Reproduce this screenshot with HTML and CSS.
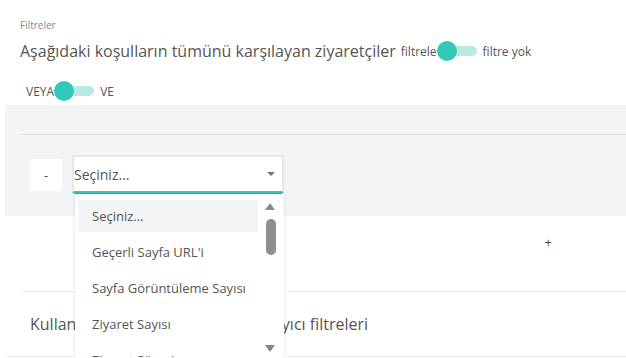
FILE: index.html
```html
<!DOCTYPE html>
<html>
  <head>
    <title>Filtreler</title>
    <link rel="stylesheet" href="styles.css">
  </head>
  <body>
    <div class="header">
      <div class="caption">Filtreler</div>
      <div class="title-row">
        <h2>Aşağıdaki koşulların tümünü karşılayan ziyaretçiler</h2>
        <span class="switch-label">filtrele</span>
        <span class="switch"><span class="knob"></span></span>
        <span class="switch-label">filtre yok</span>
      </div>
      <div class="op-row">
        <span class="switch-label">VEYA</span>
        <span class="switch"><span class="knob"></span></span>
        <span class="switch-label">VE</span>
      </div>
    </div>

    <div class="panel">
      <div class="panel-line"></div>
      <div class="rule">
        <button class="remove">-</button>
        <div class="select">
          <span>Seçiniz...</span>
          <span class="caret"></span>
          <div class="menu">
            <div class="options">
              <div class="option active">Seçiniz...</div>
              <div class="option">Geçerli Sayfa URL'i</div>
              <div class="option">Sayfa Görüntüleme Sayısı</div>
              <div class="option">Ziyaret Sayısı</div>
              <div class="option">Ziyaret Süresi</div>
            </div>
            <div class="scrollbar">
              <span class="arrow up"></span>
              <span class="thumb"></span>
              <span class="arrow down"></span>
            </div>
          </div>
        </div>
      </div>
    </div>

    <div class="add-row">
      <span class="add">+</span>
    </div>

    <div class="section">
      <h2>Kullanıcı değişkenleri ve ziyaret sayıcı filtreleri</h2>
    </div>
  </body>
</html>
```

FILE: styles.css
```css
body {
  margin: 0;
  font-family: "Open Sans", "Noto Sans", sans-serif;
  color: #555;
  background: #fff;
  overflow: hidden;
}

.header {
  padding: 18px 0 0 20px;
  height: 87px;
}

.caption {
  font-size: 10px;
  color: #888;
  line-height: 14px;
}

.title-row {
  display: flex;
  align-items: center;
  margin-top: 6px;
  height: 26px;
}

.title-row h2 {
  font-size: 16px;
  font-weight: normal;
  margin: 0 5px 0 0;
  color: #555;
}

.switch-label {
  font-size: 12px;
  color: #555;
}

.switch {
  position: relative;
  display: inline-block;
  width: 32px;
  height: 10px;
  margin: 0 6px 0 8px;
  border-radius: 5px;
  background: #b9ebe4;
}

.knob {
  position: absolute;
  left: -8px;
  top: -5px;
  width: 20px;
  height: 20px;
  border-radius: 50%;
  background: #33c9b8;
}

.op-row {
  display: flex;
  align-items: center;
  margin-top: 17px;
  padding-left: 6px;
  height: 20px;
}

.panel {
  margin-left: 5px;
  height: 111px;
  background: #f3f4f6;
  padding-left: 15px;
  box-sizing: border-box;
  padding-top: 29px;
}

.panel-line {
  height: 1px;
  background: #e4e5e8;
}

.rule {
  display: flex;
  align-items: flex-start;
  gap: 10px;
  margin-top: 20px;
  padding-left: 10px;
}

.remove {
  width: 32px;
  height: 32px;
  margin-top: 4px;
  border: 0;
  border-radius: 4px;
  background: #fff;
  color: #555;
  font-family: inherit;
  font-size: 13px;
  padding: 0;
}

.select {
  position: relative;
  width: 208px;
  height: 34px;
  background: #fff;
  border: 2px solid #e6e7ea;
  border-bottom: 2px solid #33c9b8;
  border-radius: 2px 2px 0 0;
  display: flex;
  align-items: center;
  font-size: 14px;
  color: #555;
  box-shadow: 0 3px 0 -2px #e05a5a;
}

.select > span:first-child {
  flex: 1;
}

.caret {
  width: 0;
  height: 0;
  margin-right: 7px;
  border-left: 4px solid transparent;
  border-right: 4px solid transparent;
  border-top: 4px solid #777;
}

.menu {
  position: absolute;
  left: 1px;
  right: -2px;
  top: 37px;
  height: 163px;
  background: #fff;
  box-shadow: 0 1px 3px rgba(0, 0, 0, 0.15);
  display: flex;
  overflow: hidden;
  z-index: 2;
}

.options {
  flex: 1;
  padding: 6px 0 0 4px;
}

.option {
  height: 36px;
  line-height: 32px;
  padding-left: 13px;
  font-size: 13px;
  color: #555;
}

.option.active {
  background: #f3f4f6;
  height: 32px;
  margin-bottom: 4px;
}

.scrollbar {
  width: 26px;
  position: relative;
}

.arrow {
  position: absolute;
  left: 7px;
  width: 0;
  height: 0;
  border-left: 5px solid transparent;
  border-right: 5px solid transparent;
}

.arrow.up {
  top: 9px;
  border-bottom: 7px solid #888;
}

.arrow.down {
  bottom: 5px;
  border-top: 7px solid #888;
}

.thumb {
  position: absolute;
  left: 8px;
  top: 25px;
  width: 10px;
  height: 36px;
  border-radius: 5px;
  background: #8f8f8f;
}

.add-row {
  height: 76px;
  box-sizing: border-box;
  padding: 17px 74px 0 0;
  display: flex;
  justify-content: flex-end;
  margin-left: 20px;
  border-bottom: 1px solid #eeeeef;
}

.add {
  font-size: 13px;
  color: #444;
}

.section {
  margin-left: 5px;
  height: 64px;
  border-bottom: 1px solid #eeeeef;
  display: flex;
  align-items: center;
  padding-left: 25px;
}

.section h2 {
  font-size: 16px;
  font-weight: normal;
  margin: 0;
  color: #555;
}
```
